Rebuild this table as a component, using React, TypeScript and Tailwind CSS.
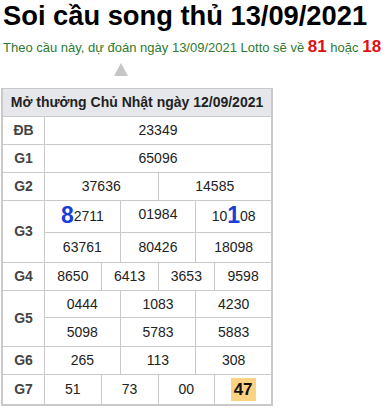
import React from 'react';

const cell = 'flex items-center justify-center bg-white text-[14px] text-[#222]';
const label = 'flex items-center justify-center bg-white text-[14px] font-bold text-[#444]';

function Big({ children }: { children: React.ReactNode }) {
  return <span className="text-[23px] font-bold leading-none text-[#1a3fd6]">{children}</span>;
}

export default function App() {
  return (
    <div className="min-h-[412px] w-[387px] bg-white font-['Liberation_Sans',Arial,sans-serif]">
      <h1 className="pl-[3px] pt-[1px] text-[27.3px] font-bold leading-[30px] text-black">Soi cầu song thủ 13/09/2021</h1>

      <p className="mt-[6px] whitespace-nowrap pl-[3px] text-[13px] leading-[20px] text-[#2f7a2f]">
        Theo cầu này, dự đoán ngày 13/09/2021 Lotto sẽ về{' '}
        <b className="text-[17px] text-[#e01010]">81</b> hoặc{' '}
        <b className="text-[17px] text-[#e01010]">18</b>
      </p>

      {/* mũi tên */}
      <div className="ml-[114px] mt-[5px] h-0 w-0 border-x-[7px] border-b-[13px] border-x-transparent border-b-[#c6c6c6]" />

      <div className="ml-px mt-[12px] w-[272px] border-x-2 border-b-2 border-t border-[#c9c9c9]">
        <div className="flex h-[28px] items-center justify-center border-b border-[#c9c9c9] bg-[#e5e7eb] text-[14px] font-bold text-[#222]">
          Mở thưởng Chủ Nhật ngày 12/09/2021
        </div>
        <div className="grid grid-cols-[41px_repeat(12,minmax(0,1fr))] grid-rows-[27px_27px_27px_31px_29px_27px_26px_28px_27px_29px] gap-px bg-[#c9c9c9]">
          <div className={label}>ĐB</div>
          <div className={`${cell} col-span-12`}>23349</div>

          <div className={label}>G1</div>
          <div className={`${cell} col-span-12`}>65096</div>

          <div className={label}>G2</div>
          <div className={`${cell} col-span-6`}>37636</div>
          <div className={`${cell} col-span-6`}>14585</div>

          <div className={`${label} row-span-2`}>G3</div>
          <div className={`${cell} col-span-4 items-end pb-[5px]`}>
            <Big>8</Big>2711
          </div>
          <div className={`${cell} col-span-4 pb-[4px]`}>01984</div>
          <div className={`${cell} col-span-4 items-end pb-[5px]`}>
            10<Big>1</Big>08
          </div>
          <div className={`${cell} col-span-4`}>63761</div>
          <div className={`${cell} col-span-4`}>80426</div>
          <div className={`${cell} col-span-4`}>18098</div>

          <div className={label}>G4</div>
          <div className={`${cell} col-span-3`}>8650</div>
          <div className={`${cell} col-span-3`}>6413</div>
          <div className={`${cell} col-span-3`}>3653</div>
          <div className={`${cell} col-span-3`}>9598</div>

          <div className={`${label} row-span-2`}>G5</div>
          <div className={`${cell} col-span-4`}>0444</div>
          <div className={`${cell} col-span-4`}>1083</div>
          <div className={`${cell} col-span-4`}>4230</div>
          <div className={`${cell} col-span-4`}>5098</div>
          <div className={`${cell} col-span-4`}>5783</div>
          <div className={`${cell} col-span-4`}>5883</div>

          <div className={label}>G6</div>
          <div className={`${cell} col-span-4`}>265</div>
          <div className={`${cell} col-span-4`}>113</div>
          <div className={`${cell} col-span-4`}>308</div>

          <div className={label}>G7</div>
          <div className={`${cell} col-span-3`}>51</div>
          <div className={`${cell} col-span-3`}>73</div>
          <div className={`${cell} col-span-3`}>00</div>
          <div className={`${cell} col-span-3`}>
            <span className="bg-[#fcd383] px-[3px] text-[17px] font-bold leading-[23px] text-[#111]">47</span>
          </div>
        </div>
      </div>
    </div>
  );
}
